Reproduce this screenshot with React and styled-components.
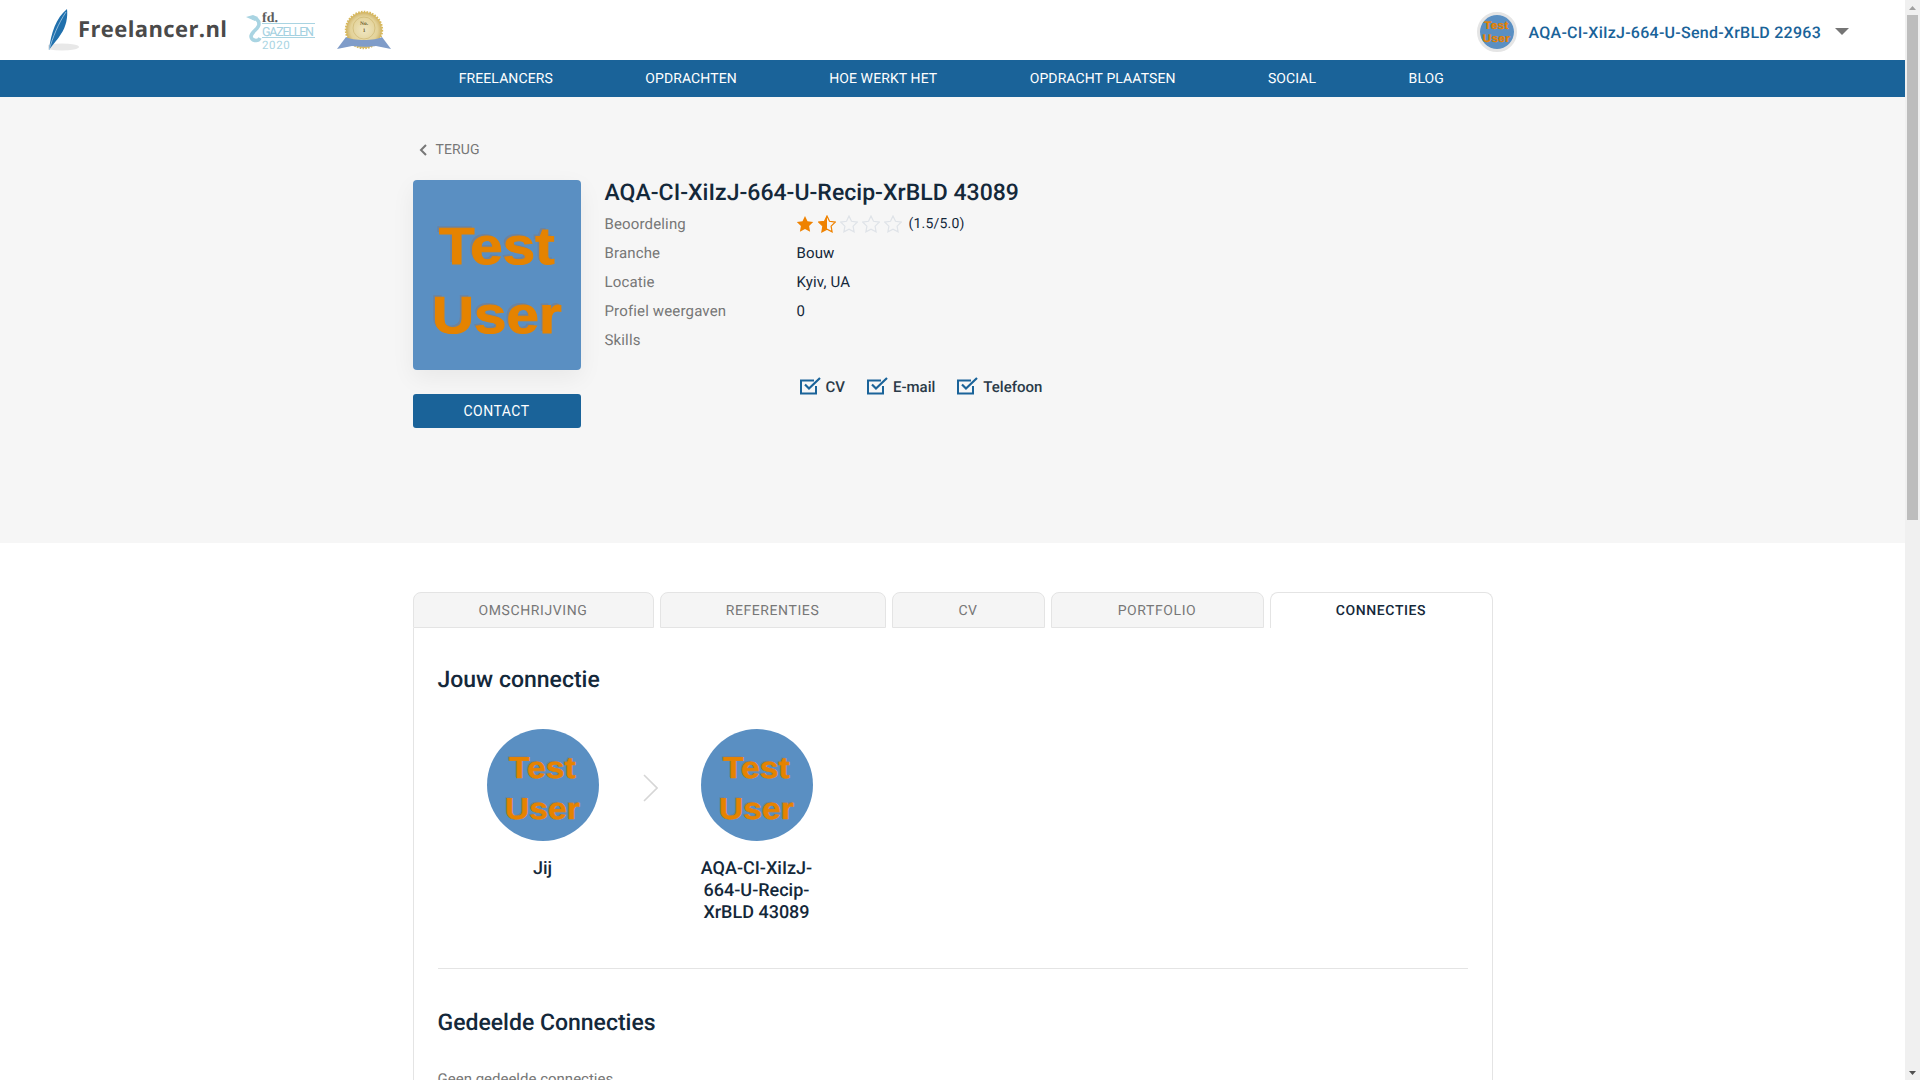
import React from 'react';
import styled, { createGlobalStyle } from 'styled-components';

const GlobalStyle = createGlobalStyle`
  html, body {
    margin: 0;
    height: 100%;
    overflow: hidden;
    background: #fff;
    font-family: Roboto, "Liberation Sans", sans-serif;
    text-rendering: geometricPrecision;
  }
`;

const Styled = {
  Page: styled.div`
    display: flex;
    height: 100vh;
    overflow: hidden;
  `,
  Main: styled.div`
    flex: 1;
    min-width: 0;
    overflow: hidden;
  `,
  Scrollbar: styled.div`
    width: 15px;
    flex: none;
    background: #f0f0f0;
    display: flex;
    flex-direction: column;
    align-items: center;
  `,
  ScrollArrow: styled.div`
    height: 15px;
    flex: none;
    display: flex;
    align-items: center;
    justify-content: center;
  `,
  ScrollThumb: styled.div`
    width: 11px;
    height: 505px;
    background: #bdbdbd;
  `,
  ScrollRest: styled.div`
    flex: 1;
  `,
  Header: styled.header`
    height: 60px;
    display: flex;
    align-items: center;
    padding-left: 48px;
    padding-right: 56px;
    background: #fff;
  `,
  Brand: styled.div`
    display: flex;
    align-items: center;
    width: 168px;
    height: 42px;
    margin-right: 30px;
    margin-top: -1px;
  `,
  BrandText: styled.span`
    font-family: "Open Sans", sans-serif;
    font-weight: 700;
    font-size: 22px;
    letter-spacing: 0.4px;
    color: #4a4a4a;
    margin-left: -2px;
    margin-top: -1px;
  `,
  UserMenu: styled.div`
    margin-left: auto;
    display: flex;
    align-items: center;
    padding-top: 4px;
  `,
  UserName: styled.span`
    margin-left: 12px;
    font-size: 16px;
    font-weight: 500;
    letter-spacing: 0.25px;
    color: #1a6399;
  `,
  Caret: styled.span`
    width: 0;
    height: 0;
    margin-left: 14px;
    margin-top: -2px;
    border-left: 7px solid transparent;
    border-right: 7px solid transparent;
    border-top: 7px solid #757575;
  `,
  Nav: styled.nav`
    height: 37px;
    background: #1a6399;
  `,
  NavInner: styled.div`
    width: 1080px;
    height: 100%;
    margin: 0 auto;
    display: flex;
    align-items: center;
  `,
  NavLink: styled.a`
    padding: 0 46.2px;
    font-size: 14px;
    letter-spacing: 0.1px;
    color: #fff;
    white-space: nowrap;
  `,
  Hero: styled.section`
    height: 446px;
    background: #f6f6f6;
  `,
  Container: styled.div`
    width: 1080px;
    margin: 0 auto;
  `,
  Back: styled.div`
    display: flex;
    align-items: center;
    height: 18px;
    padding: 44px 0 0 6px;
    font-size: 14px;
    letter-spacing: 0.1px;
    color: #777;
    gap: 9px;
  `,
  HeroBody: styled.div`
    display: flex;
    gap: 24px;
    margin-top: 21px;
  `,
  Side: styled.div`
    width: 168px;
    flex: none;
  `,
  ProfilePhoto: styled.div`
    height: 190px;
    border-radius: 4px;
    overflow: hidden;
    box-shadow: 0 8px 24px rgba(0, 0, 0, 0.06);
  `,
  Picture: styled.div`
    width: 100%;
    height: 100%;
    box-sizing: border-box;
    padding-top: ${(p) => p.$size * 0.25}px;
    background: #5a8fc2;
    color: #e58300;
    font-family: "Liberation Sans", sans-serif;
    font-weight: 700;
    font-size: ${(p) => p.$size}px;
    line-height: ${(p) => p.$line}px;
    text-align: center;
    display: flex;
    align-items: center;
    justify-content: center;
    -webkit-text-stroke: ${(p) => p.$size / 52}px #e58300;
    text-shadow: ${(p) => -p.$size / 26}px ${(p) => -p.$size / 26}px 0 rgba(120, 125, 140, 0.7);
  `,
  PictureText: styled.span`
    display: block;
    transform: scaleX(1.12);
  `,
  ContactButton: styled.button`
    display: block;
    width: 100%;
    height: 34px;
    margin-top: 24px;
    border: 0;
    border-radius: 3px;
    background: #1a6399;
    color: #fff;
    font-family: inherit;
    font-size: 14px;
    letter-spacing: 0.5px;
  `,
  Details: styled.div`
    flex: 1;
  `,
  Title: styled.h1`
    margin: 0;
    padding-top: 1px;
    height: 24px;
    font-size: 23px;
    line-height: 24px;
    letter-spacing: 0.03px;
    font-weight: 500;
    color: #14283a;
  `,
  InfoTable: styled.div`
    margin-top: 4px;
  `,
  InfoRow: styled.div`
    display: grid;
    grid-template-columns: 192px 1fr;
    height: 29px;
    align-items: center;
    font-size: 15px;
    letter-spacing: 0.15px;
    color: #14283a;
  `,
  InfoLabel: styled.span`
    color: #777;
  `,
  Rating: styled.div`
    display: flex;
    align-items: center;
    font-size: 14px;
    letter-spacing: 0.2px;
    margin-left: -1px;
  `,
  RatingText: styled.span`
    padding-top: 1px;
  `,
  Stars: styled.div`
    display: flex;
    gap: 4px;
    margin-right: 7px;
  `,
  Checks: styled.div`
    display: flex;
    margin: 21px 0 0 195px;
    height: 24px;
    align-items: center;
  `,
  Check: styled.div`
    display: flex;
    align-items: center;
    gap: 5px;
    margin-right: 22px;
    font-size: 15px;
    font-weight: 500;
    color: #2a3a48;
  `,
  CheckSvg: styled.svg`
    margin-top: -2px;
  `,
  Content: styled.section`
    padding-top: 49px;
  `,
  Tabs: styled.div`
    display: flex;
    justify-content: space-between;
    height: 36px;
    position: relative;
    z-index: 1;
  `,
  Tab: styled.div`
    width: ${(p) => p.$width}px;
    height: 36px;
    box-sizing: border-box;
    display: flex;
    align-items: center;
    justify-content: center;
    padding-top: ${(p) => (p.$active ? '1px' : '2px')};
    font-size: 14px;
    letter-spacing: 0.6px;
    font-weight: ${(p) => (p.$active ? 500 : 400)};
    color: ${(p) => (p.$active ? '#14283a' : '#777')};
    background: ${(p) => (p.$active ? '#fff' : '#f5f5f5')};
    border: 1px solid #e4e4e4;
    border-bottom: ${(p) => (p.$active ? '0' : '1px solid #e4e4e4')};
    border-radius: 8px 8px 0 0;
  `,
  Panel: styled.div`
    border: 1px solid #e4e4e4;
    border-top: 0;
    padding: 0 24px;
  `,
  SectionTitle: styled.h2`
    margin: 0;
    padding-top: ${(p) => p.$top}px;
    font-size: 23px;
    line-height: 30px;
    font-weight: 500;
    color: #14283a;
  `,
  People: styled.div`
    display: flex;
    align-items: flex-start;
    padding-left: 40px;
    margin-top: 34px;
  `,
  Person: styled.div`
    width: 130px;
    text-align: center;
    font-size: 18px;
    line-height: 22px;
    font-weight: 500;
    color: #14283a;
  `,
  PersonPhoto: styled.div`
    width: 112px;
    height: 112px;
    margin: 0 auto 17px;
    border-radius: 50%;
    overflow: hidden;
  `,
  UserPhoto: styled.div`
    width: 34px;
    height: 34px;
    border: 3px solid #e5e5e5;
    border-radius: 50%;
    overflow: hidden;
  `,
  Arrow: styled.div`
    margin: 45px 34px 0 35px;
    display: flex;
  `,
  Divider: styled.hr`
    margin: 44px 0 0;
    border: 0;
    border-top: 1px solid #e4e4e4;
  `,
  Empty: styled.p`
    margin: 31px 0 0;
    font-size: 15px;
    line-height: 20px;
    color: #777;
  `,
};

const TestPicture = ({ size, line }) => (
  <Styled.Picture $size={size} $line={line}>
    <Styled.PictureText>
      Test
      <br />
      User
    </Styled.PictureText>
  </Styled.Picture>
);

const STAR = 'M9 1l2.5 5.3 5.7.8-4.1 4 1 5.7L9 14.1l-5.1 2.7 1-5.7-4.1-4 5.7-.8z';

const Star = ({ fill }) => (
  <svg width="18" height="18" viewBox="0 0 18 18">
    <defs>
      <clipPath id="half-star">
        <rect x="0" y="0" width="9" height="18" />
      </clipPath>
    </defs>
    {fill === 'full' && <path d={STAR} fill="#ef8200" />}
    {fill === 'half' && (
      <>
        <path d={STAR} fill="none" stroke="#ef8200" strokeWidth="1.2" />
        <path d={STAR} fill="#ef8200" clipPath="url(#half-star)" />
      </>
    )}
    {fill === 'empty' && <path d={STAR} fill="none" stroke="#dfe3e8" strokeWidth="1.2" />}
  </svg>
);

const CheckIcon = () => (
  <Styled.CheckSvg width="21" height="18" viewBox="0 0 21 18" fill="none" stroke="#1a6399">
    <path d="M16 9v7.5H1V3.5h13" strokeWidth="2" />
    <path d="M5 7.5l4 4L20 1" strokeWidth="2.2" />
  </Styled.CheckSvg>
);

const Logo = () => (
  <svg width="32" height="42" viewBox="0 0 32 42" style={{ flex: 'none' }}>
    <ellipse cx="14" cy="38" rx="17" ry="3.4" fill="#e8e8e8" />
    <path d="M1 41C3 24 8 9 19 0c1 8-1 18-6 25-3 5-7 9-12 16z" fill="#2070ad" />
    <path d="M1 41C5 28 10 15 18 3" stroke="#a9cde6" strokeWidth="0.8" fill="none" />
  </svg>
);

const Gazelle = () => (
  <svg width="70" height="40" viewBox="0 0 70 40" style={{ flex: 'none' }}>
    <path d="M0 7l7-2 5 2-3 4z" fill="#a9d4e2" />
    <path d="M6 8c4 0 7 2 7 6 0 5-7 7-8 12 0 5 7 6 9 2" fill="none" stroke="#a9d4e2" strokeWidth="3.6" />
    <text x="16" y="12" fontFamily="Liberation Serif" fontWeight="700" fontSize="14" fill="#5d5d5d">
      fd.
    </text>
    <rect x="16" y="13" width="53" height="1" fill="#a9d4e2" />
    <text x="16" y="25.5" fontFamily="Roboto" fontSize="12.5" textLength="52" fill="#a3d0df">
      GAZELLEN
    </text>
    <rect x="16" y="27" width="53" height="1" fill="#a9d4e2" />
    <text x="16" y="38.5" fontFamily="Roboto" fontSize="11.5" letterSpacing="0.6" fill="#a9d4e2">
      2020
    </text>
  </svg>
);

const Badge = () => (
  <svg width="54" height="41" viewBox="0 0 54 41" style={{ marginLeft: '21px', flex: 'none' }}>
    <defs>
      <radialGradient id="seal">
        <stop offset="0" stopColor="#efe6c2" />
        <stop offset="0.75" stopColor="#e3d298" />
        <stop offset="1" stopColor="#cfb268" />
      </radialGradient>
    </defs>
    <circle cx="27" cy="20" r="18" fill="url(#seal)" stroke="#d8b95c" strokeWidth="2.4" strokeDasharray="1.6 1.2" />
    <circle cx="27" cy="18" r="11" fill="none" stroke="#c5ab60" strokeWidth="0.5" />
    <text x="27" y="15" textAnchor="middle" fontFamily="Liberation Serif" fontWeight="700" fontSize="5.5" fill="#6b5a2c">
      No.
    </text>
    <text x="27" y="22" textAnchor="middle" fontFamily="Liberation Serif" fontWeight="700" fontSize="5.5" fill="#6b5a2c">
      1
    </text>
    <path d="M9 27c6 4 30 4 36 0l3 4 6 8-10-2-5-1c-6 1-16 1-24 0l-5 1-10 2 6-8z" fill="#7f9cc9" />
  </svg>
);

const ScrollTriangle = ({ up, color }) => (
  <svg width="7" height="4" viewBox="0 0 7 4">
    <path d={up ? 'M3.5 0L7 4H0z' : 'M0 0h7L3.5 4z'} fill={color} />
  </svg>
);

const navLinks = ['FREELANCERS', 'OPDRACHTEN', 'HOE WERKT HET', 'OPDRACHT PLAATSEN', 'SOCIAL', 'BLOG'];

const tabs = [
  { label: 'OMSCHRIJVING', width: 241 },
  { label: 'REFERENTIES', width: 226 },
  { label: 'CV', width: 153 },
  { label: 'PORTFOLIO', width: 213 },
  { label: 'CONNECTIES', width: 223, active: true },
];

const recipient = 'AQA-CI-XiIzJ-664-U-Recip-XrBLD 43089';

const App = () => {
  return (
    <Styled.Page>
      <GlobalStyle />
      <Styled.Main>
        <Styled.Header>
          <Styled.Brand>
            <Logo />
            <Styled.BrandText>Freelancer.nl</Styled.BrandText>
          </Styled.Brand>
          <Gazelle />
          <Badge />
          <Styled.UserMenu>
            <Styled.UserPhoto>
              <TestPicture size={11} line={13} />
            </Styled.UserPhoto>
            <Styled.UserName>AQA-CI-XiIzJ-664-U-Send-XrBLD 22963</Styled.UserName>
            <Styled.Caret />
          </Styled.UserMenu>
        </Styled.Header>

        <Styled.Nav>
          <Styled.NavInner>
            {navLinks.map((link) => (
              <Styled.NavLink key={link}>{link}</Styled.NavLink>
            ))}
          </Styled.NavInner>
        </Styled.Nav>

        <Styled.Hero>
          <Styled.Container>
            <Styled.Back>
              <svg width="8" height="12" viewBox="0 0 8 12" fill="none" stroke="#777" strokeWidth="2">
                <path d="M7 1L2 6l5 5" />
              </svg>
              TERUG
            </Styled.Back>
            <Styled.HeroBody>
              <Styled.Side>
                <Styled.ProfilePhoto>
                  <TestPicture size={52} line={69} />
                </Styled.ProfilePhoto>
                <Styled.ContactButton>CONTACT</Styled.ContactButton>
              </Styled.Side>
              <Styled.Details>
                <Styled.Title>{recipient}</Styled.Title>
                <Styled.InfoTable>
                  <Styled.InfoRow>
                    <Styled.InfoLabel>Beoordeling</Styled.InfoLabel>
                    <Styled.Rating>
                      <Styled.Stars>
                        <Star fill="full" />
                        <Star fill="half" />
                        <Star fill="empty" />
                        <Star fill="empty" />
                        <Star fill="empty" />
                      </Styled.Stars>
                      <Styled.RatingText>(1.5/5.0)</Styled.RatingText>
                    </Styled.Rating>
                  </Styled.InfoRow>
                  <Styled.InfoRow>
                    <Styled.InfoLabel>Branche</Styled.InfoLabel>
                    <span>Bouw</span>
                  </Styled.InfoRow>
                  <Styled.InfoRow>
                    <Styled.InfoLabel>Locatie</Styled.InfoLabel>
                    <span>Kyiv, UA</span>
                  </Styled.InfoRow>
                  <Styled.InfoRow>
                    <Styled.InfoLabel>Profiel weergaven</Styled.InfoLabel>
                    <span>0</span>
                  </Styled.InfoRow>
                  <Styled.InfoRow>
                    <Styled.InfoLabel>Skills</Styled.InfoLabel>
                  </Styled.InfoRow>
                </Styled.InfoTable>
                <Styled.Checks>
                  {['CV', 'E-mail', 'Telefoon'].map((item) => (
                    <Styled.Check key={item}>
                      <CheckIcon />
                      {item}
                    </Styled.Check>
                  ))}
                </Styled.Checks>
              </Styled.Details>
            </Styled.HeroBody>
          </Styled.Container>
        </Styled.Hero>

        <Styled.Content>
          <Styled.Container>
            <Styled.Tabs>
              {tabs.map((tab) => (
                <Styled.Tab key={tab.label} $width={tab.width} $active={tab.active}>
                  {tab.label}
                </Styled.Tab>
              ))}
            </Styled.Tabs>
            <Styled.Panel>
              <Styled.SectionTitle $top={37}>Jouw connectie</Styled.SectionTitle>
              <Styled.People>
                <Styled.Person>
                  <Styled.PersonPhoto>
                    <TestPicture size={30} line={41} />
                  </Styled.PersonPhoto>
                  Jij
                </Styled.Person>
                <Styled.Arrow>
                  <svg width="15" height="28" viewBox="0 0 15 28" fill="none" stroke="#d6d6d6" strokeWidth="1.6">
                    <path d="M1 1l13 13L1 27" />
                  </svg>
                </Styled.Arrow>
                <Styled.Person>
                  <Styled.PersonPhoto>
                    <TestPicture size={30} line={41} />
                  </Styled.PersonPhoto>
                  {recipient}
                </Styled.Person>
              </Styled.People>
              <Styled.Divider />
              <Styled.SectionTitle $top={39}>Gedeelde Connecties</Styled.SectionTitle>
              <Styled.Empty>Geen gedeelde connecties</Styled.Empty>
            </Styled.Panel>
          </Styled.Container>
        </Styled.Content>
      </Styled.Main>

      <Styled.Scrollbar>
        <Styled.ScrollArrow>
          <ScrollTriangle up color="#a0a0a0" />
        </Styled.ScrollArrow>
        <Styled.ScrollThumb />
        <Styled.ScrollRest />
        <Styled.ScrollArrow>
          <ScrollTriangle color="#505050" />
        </Styled.ScrollArrow>
      </Styled.Scrollbar>
    </Styled.Page>
  );
};

export default App;
